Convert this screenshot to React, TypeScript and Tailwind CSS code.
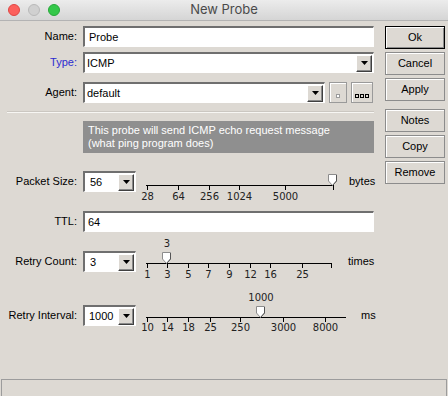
import React from 'react';

type Tick = { x: number; label?: string };

function Arrow() {
  return (
    <svg width="7" height="4" viewBox="0 0 7 4">
      <path d="M0 0h7L3.5 4z" fill="#000" />
    </svg>
  );
}

function DropBtn() {
  return (
    <div className="w-[16px] h-[17px] flex items-center justify-center bg-[#ddd9d3] border border-t-white border-l-white border-r-[#404040] border-b-[#404040] shadow-[inset_-1px_-1px_0_#8a8a8a]">
      <Arrow />
    </div>
  );
}

function Field({ className = '', children }: { className?: string; children?: React.ReactNode }) {
  return (
    <div
      className={`flex h-[21px] items-center bg-white border-t-2 border-l-2 border-r border-b border-t-[#6f6f6f] border-l-[#6f6f6f] border-r-white border-b-white text-[11px] text-black ${className}`}
    >
      {children}
    </div>
  );
}

function Combo({ className = '', text, pad = 'pl-[2px]' }: { className?: string; text: string; pad?: string }) {
  return (
    <Field className={`justify-between pr-[1px] ${className}`}>
      <span className={pad}>{text}</span>
      <DropBtn />
    </Field>
  );
}

function Row({
  label,
  className = '',
  labelClass = 'text-black',
  children,
}: {
  label: string;
  className?: string;
  labelClass?: string;
  children: React.ReactNode;
}) {
  return (
    <div className={`flex items-center h-[21px] ${className}`}>
      <div className={`w-[77px] text-right text-[11px] ${labelClass}`}>{label}</div>
      <div className="ml-[6px] flex items-center">{children}</div>
    </div>
  );
}

function Thumb({ x, top }: { x: number; top: number }) {
  return (
    <svg className="absolute" width="10" height="12" viewBox="0 0 10 12" style={{ left: x - 5, top }}>
      <path d="M0.5 0.5H8.5V7L4.5 11.5L0.5 7Z" fill="#fff" stroke="#8c8c8c" />
      <path d="M8.5 1V7L4.5 11.5" fill="none" stroke="#555" />
    </svg>
  );
}

function Slider({
  className,
  lineTop,
  lineW,
  labelTop,
  ticks,
  thumb,
  value,
  valueTop,
}: {
  className: string;
  lineTop: number;
  lineW: number;
  labelTop: number;
  ticks: Tick[];
  thumb: number;
  value?: string;
  valueTop?: number;
}) {
  return (
    <div className={`relative h-[21px] font-['DejaVu_Sans',sans-serif] text-[10px] text-[#222] ${className}`}>
      <div className="absolute left-0 h-px bg-black" style={{ top: lineTop, width: lineW }} />
      {ticks.map((t) => (
        <React.Fragment key={t.x}>
          <div className="absolute w-px h-[5px] bg-black" style={{ left: t.x, top: lineTop }} />
          {t.label && (
            <span className="absolute -translate-x-1/2 leading-[12px]" style={{ left: t.x + 0.5, top: labelTop }}>
              {t.label}
            </span>
          )}
        </React.Fragment>
      ))}
      <Thumb x={thumb} top={lineTop - 11} />
      {value && (
        <span className="absolute -translate-x-1/2 leading-[12px]" style={{ left: thumb, top: valueTop }}>
          {value}
        </span>
      )}
    </div>
  );
}

function Button({ label, isDefault = false }: { label: string; isDefault?: boolean }) {
  return (
    <div
      className={`h-[23px] w-[60px] flex items-center justify-center text-[11px] text-black border ${
        isDefault
          ? 'border-black shadow-[inset_1px_1px_0_#fff,inset_-1px_-1px_0_#8c8c8c]'
          : 'border-[#8c8c8c] shadow-[inset_1px_1px_0_#fff]'
      }`}
    >
      {label}
    </div>
  );
}

function SmallBtn({ className, children }: { className: string; children: React.ReactNode }) {
  return (
    <div
      className={`h-[21px] ml-[4px] flex items-end justify-center pb-[4px] border border-[#9a9a9a] shadow-[inset_1px_1px_0_#fff] ${className}`}
    >
      {children}
    </div>
  );
}

export default function App() {
  return (
    <div className="w-[448px] h-[396px] overflow-hidden flex flex-col bg-[#ddd9d3] font-['Liberation_Sans',Arial,sans-serif]">
      <div className="h-[21px] shrink-0 grid grid-cols-[1fr_auto_1fr] items-center bg-linear-to-b from-[#ececec] to-[#d5d5d5] border-b border-[#b3b3b3]">
        <div className="flex items-center gap-[8px] pl-[8px]">
          <div className="w-[12px] h-[12px] rounded-full bg-[#fc605c] border border-[#df4744]" />
          <div className="w-[12px] h-[12px] rounded-full bg-[#d0d0d0] border border-[#b9b9b9]" />
          <div className="w-[12px] h-[12px] rounded-full bg-[#34c84a] border border-[#27a83a]" />
        </div>
        <div className="font-['Inter',sans-serif] text-[13px] text-[#4a4a4a]">New Probe</div>
        <div />
      </div>

      <div className="flex flex-1">
        <div className="w-[385px] flex flex-col">
          <Row label="Name:" className="mt-[5px]">
            <Field className="w-[291px]">
              <span className="pl-[4px]">Probe</span>
            </Field>
          </Row>
          <Row label="Type:" labelClass="text-[#2b2bd0]" className="mt-[5px]">
            <Combo className="w-[291px]" text="ICMP" />
          </Row>
          <Row label="Agent:" className="mt-[9px]">
            <Combo className="w-[242px]" text="default" />
            <SmallBtn className="w-[18px]">
              <div className="w-[4px] h-[4px] border border-[#9a9a9a] bg-white" />
            </SmallBtn>
            <SmallBtn className="w-[22px] gap-[1px]">
              <div className="w-[4px] h-[4px] border border-black" />
              <div className="w-[4px] h-[4px] border border-black" />
              <div className="w-[4px] h-[4px] border border-black" />
            </SmallBtn>
          </Row>

          <div className="mt-[8px] ml-[7px] w-[367px] h-[2px] border-t border-b border-t-[#cbc7c1] border-b-[#f7f6f3]" />

          <div className="mt-[8px] ml-[83px] w-[291px] h-[32px] bg-[#8f8f8f] text-white text-[11px] leading-[13px] pl-[5px] pt-[3px]">
            <div>This probe will send ICMP echo request message</div>
            <div>(what ping program does)</div>
          </div>

          <div className="mt-[18px] flex items-center">
            <Row label="Packet Size:">
              <Combo className="w-[53px]" text="56" pad="pl-[5px]" />
            </Row>
            <Slider
              className="ml-[10px] w-[200px]"
              lineTop={14}
              lineW={188}
              labelTop={20}
              thumb={187}
              ticks={[
                { x: 1, label: '28' },
                { x: 32, label: '64' },
                { x: 63, label: '256' },
                { x: 93, label: '1024' },
                { x: 139, label: '5000' },
                { x: 187 },
              ]}
            />
            <span className="ml-[3px] text-[11px]">bytes</span>
          </div>

          <Row label="TTL:" className="mt-[19px]">
            <Field className="w-[291px]">
              <span className="pl-[3px]">64</span>
            </Field>
          </Row>

          <div className="mt-[19px] flex items-center">
            <Row label="Retry Count:">
              <Combo className="w-[53px]" text="3" pad="pl-[5px]" />
            </Row>
            <Slider
              className="ml-[10px] w-[200px]"
              lineTop={12}
              lineW={186}
              labelTop={18}
              thumb={21}
              value="3"
              valueTop={-13}
              ticks={[
                { x: 1, label: '1' },
                { x: 21, label: '3' },
                { x: 42, label: '5' },
                { x: 62, label: '7' },
                { x: 83, label: '9' },
                { x: 104, label: '12' },
                { x: 124, label: '16' },
                { x: 156, label: '25' },
                { x: 185 },
              ]}
            />
            <span className="ml-[2px] text-[11px]">times</span>
          </div>

          <div className="mt-[33px] flex items-center">
            <Row label="Retry Interval:">
              <Combo className="w-[53px]" text="1000" pad="pl-[4px]" />
            </Row>
            <Slider
              className="ml-[10px] w-[200px]"
              lineTop={12}
              lineW={200}
              labelTop={17}
              thumb={115}
              value="1000"
              valueTop={-13}
              ticks={[
                { x: 1, label: '10' },
                { x: 21, label: '14' },
                { x: 42, label: '18' },
                { x: 64, label: '25' },
                { x: 94, label: '250' },
                { x: 137, label: '3000' },
                { x: 179, label: '8000' },
              ]}
            />
            <span className="ml-[15px] text-[11px]">ms</span>
          </div>
        </div>

        <div className="w-[60px] flex flex-col pt-[5px]">
          <Button label="Ok" isDefault />
          <div className="mt-[3px]">
            <Button label="Cancel" />
          </div>
          <div className="mt-[3px]">
            <Button label="Apply" />
          </div>
          <div className="mt-[8px]">
            <Button label="Notes" />
          </div>
          <div className="mt-[3px]">
            <Button label="Copy" />
          </div>
          <div className="mt-[3px]">
            <Button label="Remove" />
          </div>
        </div>
      </div>

      <div className="mx-[1px] h-[17px] shrink-0 border-t border-l border-r border-[#9c9c9c]" />
    </div>
  );
}
